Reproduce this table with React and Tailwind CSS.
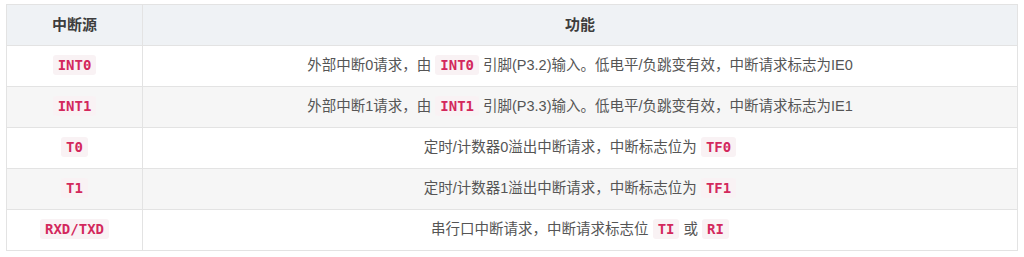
import React from 'react';

const rows = [
  { src: 'INT0', desc: <>外部中断0请求，由 <C>INT0</C> 引脚(P3.2)输入。低电平/负跳变有效，中断请求标志为IE0</> },
  { src: 'INT1', desc: <>外部中断1请求，由 <C>INT1</C> 引脚(P3.3)输入。低电平/负跳变有效，中断请求标志为IE1</> },
  { src: 'T0', desc: <>定时/计数器0溢出中断请求，中断标志位为 <C>TF0</C></> },
  { src: 'T1', desc: <>定时/计数器1溢出中断请求，中断标志位为 <C>TF1</C></> },
  { src: 'RXD/TXD', desc: <>串行口中断请求，中断请求标志位 <C>TI</C> 或 <C>RI</C></> },
];

function C({ children }) {
  return (
    <code className="rounded-[3px] bg-[#f9f2f4] px-[5px] py-[2px] font-['DejaVu_Sans_Mono',monospace] text-[14px] font-semibold text-[#d3285c]">
      {children}
    </code>
  );
}

export default function App() {
  return (
    <div className="bg-white px-[6px] pt-[4px] font-['Liberation_Sans','Noto_Sans_CJK_SC',sans-serif] text-[14.5px] text-[#555]">
      <table className="w-full border-collapse border border-[#e3e3e3]">
        <thead>
          <tr className="h-[41px] bg-[#eff2f5]">
            <th className="w-[136px] border border-[#e3e3e3] text-[15px] font-bold text-[#3d3d3d]">中断源</th>
            <th className="border border-[#e3e3e3] text-[15px] font-bold text-[#3d3d3d]">功能</th>
          </tr>
        </thead>
        <tbody>
          {rows.map((r, i) => (
            <tr key={r.src} className={`h-[41px] ${i % 2 ? 'bg-[#f6f6f6]' : 'bg-white'}`}>
              <td className="border border-[#e3e3e3] text-center"><C>{r.src}</C></td>
              <td className="border border-[#e3e3e3] text-center">{r.desc}</td>
            </tr>
          ))}
        </tbody>
      </table>
    </div>
  );
}
